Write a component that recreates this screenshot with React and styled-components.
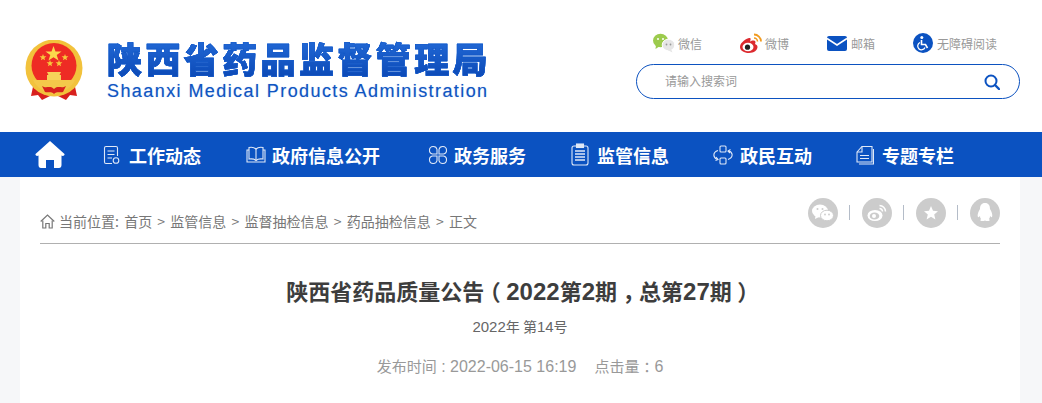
import styled, { createGlobalStyle } from 'styled-components'

const cjk = `"Noto Sans CJK SC", "Liberation Sans", sans-serif`

const GlobalStyle = createGlobalStyle`
  html, body { margin: 0; padding: 0; height: 100%; overflow: hidden; }
  body { background: #f6f7f9; font-family: "Liberation Sans", "Noto Sans CJK SC", sans-serif; }
  #root { height: 100%; }
`

const Page = styled.div`
  height: 100vh;
  display: flex;
  flex-direction: column;
`

//top part: logo left, links and search right
const Header = styled.header`
  height: 132px;
  flex: none;
  background: #fff;
  display: flex;
  justify-content: space-between;
  padding: 0 22px 0 25px;
  box-sizing: border-box;
`
const Brand = styled.div`
  display: flex;
  align-items: flex-start;
  padding-top: 40px;
`
const BrandText = styled.div`
  margin-left: 24px;
  display: flex;
  flex-direction: column;
`
const BrandName = styled.div`
  font-family: "Liberation Sans", "Noto Sans CJK SC", sans-serif;
  font-weight: 900;
  font-size: 35px;
  line-height: 38px;
  letter-spacing: 3.4px;
  height: 38px;
  padding-top: 2px;
  margin-bottom: -2px;
  white-space: nowrap;
  color: #0d4fbd;
  background: linear-gradient(#2269d6, #0a47b4);
  -webkit-background-clip: text;
  background-clip: text;
  -webkit-text-fill-color: transparent;
  -webkit-text-stroke: .5px #1257c6;
  filter: drop-shadow(0 0 .6px #3b7be0);
`
const BrandEn = styled.div`
  font-size: 18px;
  line-height: 20px;
  letter-spacing: 1.42px;
  margin-top: 3px;
  color: #0f55c2;
  text-shadow: 0 0 1px rgba(15, 85, 194, .4);
  white-space: nowrap;
`
const HeaderRight = styled.div`
  width: 384px;
  padding-top: 31px;
`
const TopLinks = styled.div`
  display: flex;
  align-items: center;
  gap: 38px;
  padding-left: 17px;
  height: 24px;
`
const TopLink = styled.a`
  display: flex;
  align-items: center;
  gap: ${(props) => props.gap || 3}px;
  font-family: ${cjk};
  font-size: 12px;
  color: #999;
  white-space: nowrap;
`
const SearchBox = styled.div`
  margin-top: 9px;
  height: 35px;
  box-sizing: border-box;
  border: 1px solid #0c52c0;
  border-radius: 18px;
  display: flex;
  align-items: center;
  padding: 0 19px 2px 29px;
`
const SearchInput = styled.input`
  flex: 1;
  border: 0;
  outline: 0;
  background: none;
  padding: 0;
  margin-left: -1px;
  font-family: ${cjk};
  font-size: 12px;
  &::placeholder { color: #999; opacity: 1; }
`

const Nav = styled.nav`
  height: 45px;
  flex: none;
  background: #0b52c1;
  display: flex;
  align-items: center;
  padding-left: 35px;
`
const HomeLink = styled.a`
  display: flex;
  margin-right: 38px;
`
const NavItem = styled.a`
  display: flex;
  align-items: center;
  gap: ${(props) => props.gap || 7}px;
  margin-right: ${(props) => props.mr || 45}px;
  font-family: ${cjk};
  font-weight: 700;
  font-size: 18px;
  color: #fff;
  white-space: nowrap;
`

const Main = styled.main`
  flex: 1;
  margin: 0 22px 0 20px;
  background: #fff;
  padding: 0 20px;
  min-height: 0;
`
const CrumbBar = styled.div`
  height: 67px;
  box-sizing: border-box;
  border-bottom: 1px solid #b0b0b0;
  display: flex;
  justify-content: space-between;
  align-items: flex-start;
`
const Crumbs = styled.div`
  display: flex;
  align-items: center;
  gap: 4px;
  margin-top: 35px;
  font-family: ${cjk};
  font-size: 14px;
  line-height: 18px;
  word-spacing: 2.1px;
  color: #777;
  white-space: pre;
`
const Share = styled.div`
  display: flex;
  align-items: center;
  margin-top: 20px;
`
const ShareIcon = styled.a`
  width: 30px;
  height: 30px;
  border-radius: 50%;
  background: #ccc;
  display: flex;
  align-items: center;
  justify-content: center;
  margin-top: ${(props) => props.low || 0}px;
`
const ShareSep = styled.span`
  width: 1px;
  height: 15px;
  margin: 0 12px 0 11px;
  background: #b4bcc8;
`
const Title = styled.h1`
  margin: 30px 0 0;
  text-align: center;
  font-family: ${cjk};
  font-weight: 700;
  font-size: 22px;
  line-height: 32px;
  color: #3d3d3d;
`
const Issue = styled.div`
  margin-top: 8px;
  text-align: center;
  font-family: ${cjk};
  font-size: 14px;
  line-height: 20px;
  color: #666;
`
const Meta = styled.div`
  margin-top: 19px;
  display: flex;
  justify-content: center;
  gap: 18px;
  font-family: ${cjk};
  font-size: 15px;
  line-height: 20px;
  color: #999;
`
//latin digits sit a little larger than the chinese text around them
const Num = styled.span`
  font-family: "Liberation Sans", sans-serif;
  font-size: ${(props) => props.size}px;
`
//half-width glyph with padding, so the punctuation sits centred in its cell
const Punct = styled.span`
  font-feature-settings: "halt";
  padding: 0 .25em;
`

const Emblem = () => (
  <svg width="58" height="62" viewBox="0 0 58 62">
    <path d="M9 42 L6 56 L13 55 L17 60 L25 56 L33 56 L41 60 L45 55 L52 56 L49 42 Z" fill="#d8201d" />
    <circle cx="29" cy="28" r="28.500" fill="#f2c23c" />
    <circle cx="29" cy="25.500" r="22.500" fill="#ee2b24" />
    <polygon points="28.500,6 30.500,11.500 36.500,11.500 31.700,15 33.500,20.500 28.500,17.200 23.500,20.500 25.300,15 20.500,11.500 26.500,11.500" fill="#fbd84c" />
    <polygon points="18,14 18.900,16.300 21.400,16.300 19.400,17.900 20.100,20.300 18,18.900 15.900,20.300 16.600,17.900 14.600,16.300 17.100,16.300" fill="#f7c93c" />
    <polygon points="40,14 40.900,16.300 43.400,16.300 41.400,17.900 42.100,20.300 40,18.900 37.900,20.300 38.600,17.900 36.600,16.300 39.100,16.300" fill="#f7c93c" />
    <polygon points="25,20 25.900,22.300 28.400,22.300 26.400,23.900 27.100,26.300 25,24.900 22.900,26.300 23.600,23.900 21.600,22.300 24.100,22.300" fill="#f7c93c" />
    <polygon points="34,20 34.900,22.300 37.400,22.300 35.400,23.900 36.100,26.300 34,24.900 31.900,26.300 32.600,23.900 30.600,22.300 33.100,22.300" fill="#f7c93c" />
    <path d="M22 32 H36 L34.500 35 H36 V40 H22 V35 H23.500 Z" fill="#f6d25a" />
    <path d="M8 40 H50 C47 47 40 52 29 54 C18 52 11 47 8 40 Z" fill="#f4c84a" />
    <path d="M17 46 C21 49 25 45 29 49 C33 45 37 49 41 46 L38 52 C35 53 32 51 29 54 C26 51 23 53 20 52 Z" fill="#d8201d" />
  </svg>
)

const Wechat = () => (
  <svg width="22" height="20" viewBox="0 0 22 20">
    <ellipse cx="7.500" cy="7.500" rx="7.500" ry="6.800" fill="#9ccb4d" />
    <path d="M3 12 L2.500 16 L7 13 Z" fill="#9ccb4d" />
    <circle cx="5" cy="6" r="1" fill="#fff" />
    <circle cx="10" cy="6" r="1" fill="#fff" />
    <ellipse cx="15.500" cy="12" rx="6.300" ry="5.800" fill="#e6e6e6" stroke="#fff" />
    <path d="M18 16 L19.500 19.500 L14.500 17 Z" fill="#e6e6e6" />
    <circle cx="13.500" cy="11.500" r=".9" fill="#999" />
    <circle cx="17.500" cy="11.500" r=".9" fill="#999" />
  </svg>
)

const Weibo = () => (
  <svg width="22" height="20" viewBox="0 0 22 20">
    <path d="M9 5 C3 7 0 11 0 14 C0 17.500 4 20 9 20 C14 20 17.500 17 17.500 14 C17.500 12 16 11.500 15 11 C16 9 15.500 7.500 13.500 7.500 C12 7.500 11 8 10 8.500 C11 6 11 4.500 9 5 Z" fill="#dc2a2f" />
    <ellipse cx="8" cy="14" rx="5.500" ry="4.300" fill="#fff" />
    <circle cx="7.500" cy="14.200" r="2.600" fill="#222" />
    <path d="M14 1.500 A7 7 0 0 1 21 8.500" fill="none" stroke="#f19a1f" strokeWidth="1.800" />
    <path d="M14 5 A3.500 3.500 0 0 1 17.500 8.500" fill="none" stroke="#f19a1f" strokeWidth="1.600" />
  </svg>
)

const Mail = () => (
  <svg width="20" height="15" viewBox="0 0 20 15">
    <rect width="20" height="15" rx="2" fill="#0b52c1" />
    <path d="M0 2.500 L10 9 L20 2.500" fill="none" stroke="#fff" strokeWidth="1.600" />
  </svg>
)

const Access = () => (
  <svg width="20" height="20" viewBox="0 0 20 20">
    <circle cx="10" cy="10" r="10" fill="#0b52c1" />
    <circle cx="8.800" cy="4.600" r="1.500" fill="#fff" />
    <path d="M8.500 7 V11.500 H12.500 L14.500 15" fill="none" stroke="#fff" strokeWidth="1.600" />
    <path d="M7 9.500 A3.800 3.800 0 1 0 12 14.500" fill="none" stroke="#fff" strokeWidth="1.300" />
  </svg>
)

const Lens = () => (
  <svg width="16" height="16" viewBox="0 0 16 16" style={{ marginTop: 2 }}>
    <circle cx="7" cy="7" r="5.500" fill="none" stroke="#0b52c1" strokeWidth="2" />
    <path d="M11 11 L15 15" stroke="#0b52c1" strokeWidth="2.400" strokeLinecap="round" />
  </svg>
)

const Home = () => (
  <svg width="30" height="27" viewBox="0 0 30 27">
    <path d="M15 0 L29.500 13 C30 14.500 28 15.500 26.500 14.500 V24 C26.500 26 25.500 27 24 27 H19 V19 H11 V27 H6 C4.500 27 3.500 26 3.500 24 V14.500 C2 15.500 0 14.500 .5 13 Z" fill="#fff" />
  </svg>
)

const line = { fill: 'none', stroke: '#dfe8f7', strokeWidth: 1.100 }

const NavDoc = () => (
  <svg width="19" height="20" viewBox="0 0 19 20" {...line}>
    <path d="M9 18.500 H3 C2 18.500 1.500 18 1.500 17 V3 C1.500 2 2 1.500 3 1.500 H13 C14 1.500 14.500 2 14.500 3 V11" />
    <path d="M4.500 6 H11.500 M4.500 9.500 H11.500 M4.500 13 H9" />
    <circle cx="13" cy="15.500" r="2.800" />
  </svg>
)
const NavBook = () => (
  <svg width="20" height="18" viewBox="0 0 20 18" {...line}>
    <path d="M3 1.500 C6 1 8.500 1.500 10 3 C11.500 1.500 14 1 17 1.500 V13 C14 12.600 11.500 13 10 14.500 C8.500 13 6 12.600 3 13 Z" />
    <path d="M10 3 V14.500" />
    <path d="M3 4 H1 V16 H19 V4 H17" />
  </svg>
)
const NavCross = () => (
  <svg width="20" height="20" viewBox="0 0 20 20" {...line}>
    <path d="M9 9 H4.500 A3.800 3.800 0 1 1 9 4.500 Z" />
    <path d="M11 9 H15.500 A3.800 3.800 0 1 0 11 4.500 Z" />
    <path d="M9 11 H4.500 A3.800 3.800 0 1 0 9 15.500 Z" />
    <path d="M11 11 H15.500 A3.800 3.800 0 1 1 11 15.500 Z" />
  </svg>
)
const NavClip = () => (
  <svg width="18" height="23" viewBox="0 0 18 23" {...line}>
    <rect x="1" y="3" width="16" height="19" rx="2" />
    <rect x="5.500" y="1" width="7" height="3.500" fill="#dfe8f7" />
    <path d="M4 8 H14 M4 11 H14 M4 14 H14 M4 17 H14" strokeWidth="1.500" />
  </svg>
)
const NavSwap = () => (
  <svg width="20" height="20" viewBox="0 0 20 20" {...line}>
    <rect x="7" y="1" width="6" height="6" rx="1" />
    <rect x="7" y="13" width="6" height="6" rx="1" />
    <path d="M5 5.500 C2 6.500 .5 8.500 1 11 C1.500 13 3 14 5 14.500" />
    <path d="M15 14.500 C18 13.500 19.500 11.500 19 9 C18.500 7 17 6 15 6" />
    <path d="M3 12 L5 14.500 L2.500 15.500 M17 8 L15 6 L17.500 4.500" />
  </svg>
)
const NavPaper = () => (
  <svg width="18" height="20" viewBox="0 0 18 20" {...line}>
    <path d="M1 7 L6 1.500 H16 V17 H1 Z" />
    <path d="M1 7 H6 V1.500" />
    <path d="M4 10.500 H13 M4 13.500 H13" />
    <path d="M3 19 H17.500 V4" />
  </svg>
)

const Crumb = () => (
  <svg width="15" height="15" viewBox="0 0 15 15" fill="none" stroke="#777" strokeWidth="1.200">
    <path d="M.7 7.500 L7.500 1 L14.300 7.500" />
    <path d="M2.800 6.500 V14 H5.800 V9.500 H9.200 V14 H12.200 V6.500" />
  </svg>
)

const ShareWechat = () => (
  <svg width="22" height="18" viewBox="0 0 22 18">
    <ellipse cx="8" cy="7" rx="8" ry="6.500" fill="#fff" />
    <path d="M3.500 11.500 L3 15 L7 13 Z" fill="#fff" />
    <ellipse cx="15" cy="11.500" rx="6.500" ry="5.300" fill="#fff" stroke="#ccc" />
    <circle cx="5.500" cy="5" r="1" fill="#ccc" />
    <circle cx="10.500" cy="5" r="1" fill="#ccc" />
    <circle cx="13" cy="10.500" r=".9" fill="#ccc" />
    <circle cx="17" cy="10.500" r=".9" fill="#ccc" />
  </svg>
)
const ShareWeibo = () => (
  <svg width="20" height="18" viewBox="0 0 20 18">
    <ellipse cx="8" cy="11.500" rx="7.500" ry="5.500" fill="#fff" />
    <ellipse cx="7.500" cy="12" rx="4.800" ry="3.600" fill="#ccc" />
    <circle cx="7" cy="12" r="2" fill="#fff" />
    <path d="M12.500 1.500 A6 6 0 0 1 18.500 7.500 M12.500 4.500 A3 3 0 0 1 15.500 7.500" fill="none" stroke="#fff" strokeWidth="1.500" />
  </svg>
)
const ShareStar = () => (
  <svg width="14" height="14" viewBox="0 0 14 14">
    <polygon points="7,0 9,4.800 14,5.200 10.200,8.500 11.400,13.500 7,10.800 2.600,13.500 3.800,8.500 0,5.200 5,4.800" fill="#fff" />
  </svg>
)
const ShareQQ = () => (
  <svg width="16" height="19" viewBox="0 0 16 19">
    <path d="M8 0 C11.500 0 13 2.500 13 6 C14.500 8.500 16 12 15 14 C14.500 14.500 13.800 14 13 13 C13 14.500 12.500 15.500 11.800 16 C13 16.500 13 18 11.500 18 C10 18.200 9 18 8 17.500 C7 18 6 18.200 4.500 18 C3 18 3 16.500 4.200 16 C3.500 15.500 3 14.500 3 13 C2.200 14 1.500 14.500 1 14 C0 12 1.500 8.500 3 6 C3 2.500 4.500 0 8 0 Z" fill="#fff" />
  </svg>
)

const navItems = [
  { icon: <NavDoc />, text: '工作动态' },
  { icon: <NavBook />, text: '政府信息公开', gap: 6, mr: 48 },
  { icon: <NavCross />, text: '政务服务', gap: 6 },
  { icon: <NavClip />, text: '监管信息', gap: 8, mr: 44 },
  { icon: <NavSwap />, text: '政民互动', gap: 7, mr: 44 },
  { icon: <NavPaper />, text: '专题专栏', gap: 8 },
]

export default function App() {
  return (
    <Page>
      <GlobalStyle />
      <Header>
        <Brand>
          <Emblem />
          <BrandText>
            <BrandName>陕西省药品监督管理局</BrandName>
            <BrandEn>Shaanxi Medical Products Administration</BrandEn>
          </BrandText>
        </Brand>
        <HeaderRight>
          <TopLinks>
            <TopLink><Wechat />微信</TopLink>
            <TopLink><Weibo />微博</TopLink>
            <TopLink gap={4}><Mail />邮箱</TopLink>
            <TopLink gap={4}><Access />无障碍阅读</TopLink>
          </TopLinks>
          <SearchBox>
            <SearchInput placeholder="请输入搜索词" />
            <Lens />
          </SearchBox>
        </HeaderRight>
      </Header>
      <Nav>
        <HomeLink><Home /></HomeLink>
        {navItems.map((item) => (
          <NavItem key={item.text} gap={item.gap} mr={item.mr}>
            {item.icon}
            {item.text}
          </NavItem>
        ))}
      </Nav>
      <Main>
        <CrumbBar>
          <Crumbs>
            <Crumb />
            <span>当前位置: 首页 &gt; 监管信息 &gt; 监督抽检信息 &gt; 药品抽检信息 &gt; 正文</span>
          </Crumbs>
          <Share>
            <ShareIcon><ShareWechat /></ShareIcon>
            <ShareSep />
            <ShareIcon><ShareWeibo /></ShareIcon>
            <ShareSep />
            <ShareIcon low={1}><ShareStar /></ShareIcon>
            <ShareSep />
            <ShareIcon><ShareQQ /></ShareIcon>
          </Share>
        </CrumbBar>
        <Title>
          陕西省药品质量公告<Punct>（</Punct><Num size={24}>2022</Num>第<Num size={24}>2</Num>期<Punct>，</Punct>总第<Num size={24}>27</Num>期<Punct>）</Punct>
        </Title>
        <Issue>
          <Num size={15}>2022</Num>年 第<Num size={15}>14</Num>号
        </Issue>
        <Meta>
          <span>发布时间<Num size={16}> : 2022-06-15 16:19</Num></span>
          <span>点击量<Punct>：</Punct><Num size={16}>6</Num></span>
        </Meta>
      </Main>
    </Page>
  )
}
